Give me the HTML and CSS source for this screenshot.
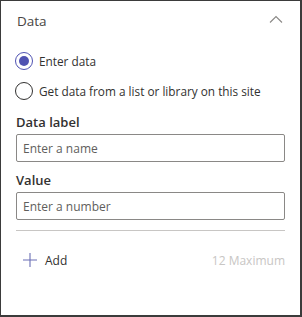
FILE: index.html
```html
<!DOCTYPE html>
<html lang="en">
<head>
  <meta charset="UTF-8">
  <title>Data</title>
  <link rel="stylesheet" href="styles.css">
</head>
<body>
  <div class="panel">
    <div class="header">
      <h2>Data</h2>
      <svg class="chevron" width="14" height="8" viewBox="0 0 14 8">
        <path d="M1 7.5 L7 1.5 L13 7.5" fill="none" stroke="#8a8886" stroke-width="1.1"/>
      </svg>
    </div>

    <div class="options">
      <label class="option">
        <input type="radio" name="source" checked>
        <span>Enter data</span>
      </label>
      <label class="option">
        <input type="radio" name="source">
        <span>Get data from a list or library on this site</span>
      </label>
    </div>

    <div class="field">
      <label class="field-label">Data label</label>
      <input type="text" placeholder="Enter a name">
    </div>
    <div class="field">
      <label class="field-label">Value</label>
      <input type="text" placeholder="Enter a number">
    </div>

    <div class="divider"></div>

    <div class="add-row">
      <button class="add">
        <svg width="14" height="14" viewBox="0 0 14 14">
          <path d="M7 0 V14 M0 7 H14" stroke="#6b6fb5" stroke-width="1.1"/>
        </svg>
        Add
      </button>
      <span class="limit">12 Maximum</span>
    </div>
  </div>
</body>
</html>
```

FILE: styles.css
```css
* { box-sizing: border-box; margin: 0; padding: 0; }
body {
  font-family: 'Open Sans', sans-serif;
  font-size: 12px;
  color: #323130;
  background: white;
}
.panel {
  width: 302px;
  height: 317px;
  border-left: 1px solid #3b3b3b;
  border-top: 1px solid #3b3b3b;
  border-right: 2px solid #3b3b3b;
  border-bottom: 2px solid #3b3b3b;
  padding: 0 15px;
}
.header {
  height: 40px;
  display: flex;
  align-items: center;
  justify-content: space-between;
  padding-left: 1px;
}
.header h2 {
  font-size: 13.5px;
  font-weight: 400;
  color: #484644;
}
.chevron {
  margin-right: 2px;
  margin-bottom: 4px;
}
.options {
  margin-top: 5px;
}
.option {
  height: 30px;
  display: flex;
  align-items: center;
  gap: 6px;
  margin-left: -1px;
  font-size: 11.8px;
}
.option input {
  appearance: none;
  width: 18px;
  height: 18px;
  border: 1px solid #323130;
  border-radius: 50%;
  display: grid;
  place-items: center;
}
.option input:checked {
  border-color: #4f52b2;
}
.option input:checked::after {
  content: "";
  width: 10px;
  height: 10px;
  border-radius: 50%;
  background: #4f52b2;
}
.field {
  margin-top: 6px;
}
.field + .field {
  margin-top: 8px;
}
.field-label {
  display: block;
  font-size: 13px;
  font-weight: 600;
  line-height: 20px;
  margin-bottom: 2px;
}
.field input {
  width: 100%;
  height: 28px;
  border: 1px solid #8a8886;
  border-radius: 2px;
  padding: 0 6px;
  font-family: 'Open Sans', sans-serif;
  font-size: 12px;
  color: #323130;
}
.field input::placeholder {
  color: #605e5c;
}
.divider {
  margin-top: 10px;
  height: 1px;
  background: #c8c6c4;
}
.add-row {
  margin-top: 13px;
  height: 32px;
  display: flex;
  align-items: center;
  justify-content: space-between;
}
.add {
  display: flex;
  align-items: center;
  gap: 8px;
  background: none;
  border: none;
  margin-left: 7px;
  font-family: 'Open Sans', sans-serif;
  font-size: 12px;
  color: #323130;
}
.limit {
  color: #c8c6c4;
}
```
